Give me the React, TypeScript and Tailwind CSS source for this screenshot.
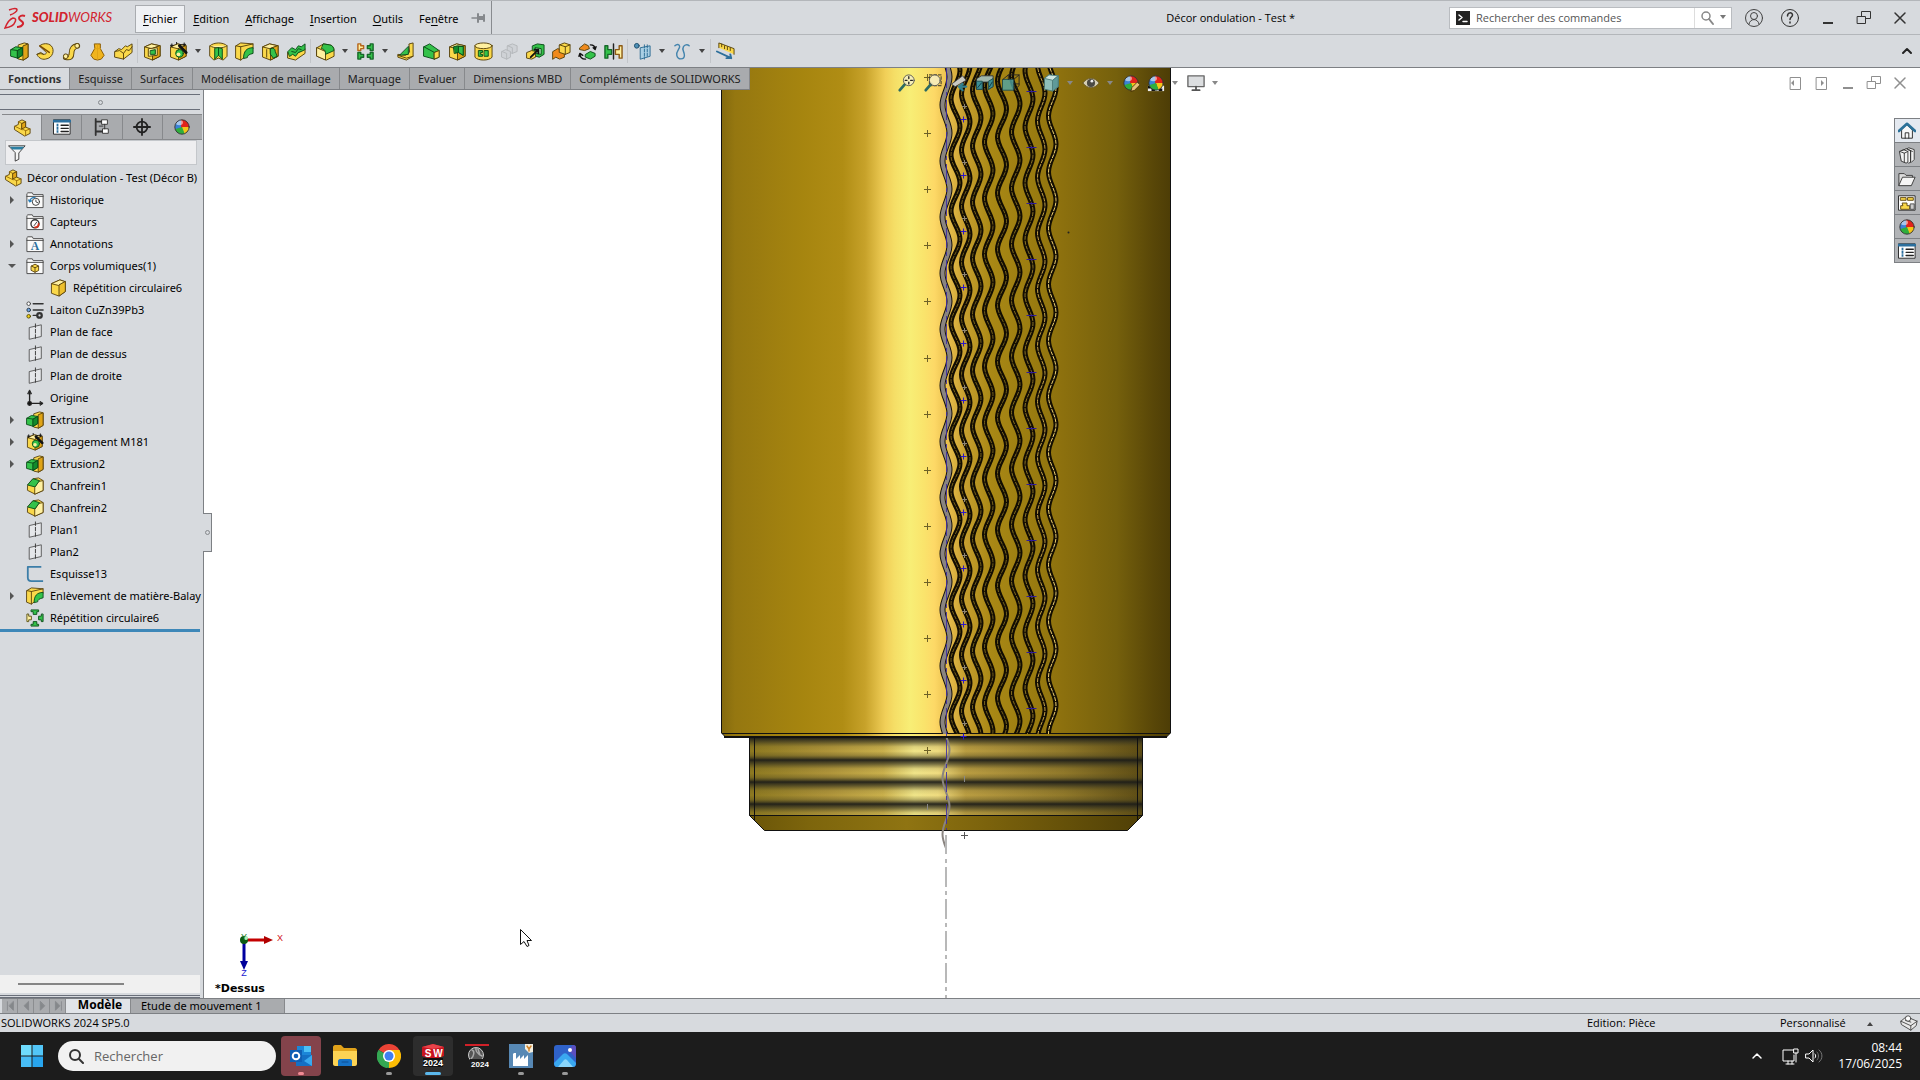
import type { ReactNode } from "react";
import clsx from "clsx";

const Y = "#fad84a";
const YL = "#fff0a0";
const YD = "#e0a416";
const G = "#34c24a";
const GD = "#128a2c";
const INK = "#5a430c";

function Svg({ size = 20, box = 20, children, className }: { size?: number; box?: number; children: ReactNode; className?: string }) {
  return (
    <svg
      width={size}
      height={size}
      viewBox={`0 0 ${box} ${box}`}
      fill="none"
      strokeLinejoin="round"
      strokeLinecap="round"
      className={clsx("shrink-0", className)}
      aria-hidden="true"
    >
      {children}
    </svg>
  );
}

/* ---------- feature icons ---------- */

const YellowBox = () => (
  <g stroke={INK} strokeWidth="1">
    <path d="M2 5 9 2l9 2v11l-8 4-8-3z" fill={Y} />
    <path d="M2 5 9 2l9 2-8 3z" fill={YL} />
    <path d="M10 7v12l8-4V4z" fill={YD} />
  </g>
);

const ICONS: Record<string, ReactNode> = {
  extrude: (
    <g strokeWidth="1">
      <path d="m9 3 6-2 4 1v14l-5 3-5-1z" fill={Y} stroke={INK} />
      <path d="m14 4 5-2v14l-5 3z" fill={YD} stroke={INK} />
      <path d="M1 8 6 5l7 1v8l-5 3-7-2z" fill={G} stroke="#0a4d18" />
      <path d="m1 8 7 1 5-3M8 9v8" stroke="#0a4d18" />
      <path d="m8 9 5-3v8l-5 3z" fill={GD} stroke="#0a4d18" />
    </g>
  ),
  revolve: (
    <g stroke={INK} strokeWidth="1">
      <path d="M4 4c3-3 9-3 12 0 4 4 2 13-6 14-4 1-8-2-9-5l4-2 3 2c3 0 4-2 2-3z" fill={Y} />
      <path d="m4 4 10 7" stroke="#7a4a00" strokeWidth="1.500" />
      <path d="M1 13c3-1 4-1 7 0" />
    </g>
  ),
  sweep: (
    <g>
      <path d="M4 16c5 1 6-1 6-4 0-4 1-7 6-8" stroke={INK} strokeWidth="6" />
      <path d="M4 16c5 1 6-1 6-4 0-4 1-7 6-8" stroke={Y} strokeWidth="4" />
      <circle cx="4" cy="15" r="2.5" fill={YL} stroke={INK} />
      <circle cx="16" cy="4" r="2.5" fill={YL} stroke={INK} />
    </g>
  ),
  loft: (
    <g stroke="#8a5b00" strokeWidth="1">
      <path d="M7 2h6v5l4 7-3 4-4 1-4-1-3-4 4-7z" fill="#f0b41e" />
      <path d="M10 3v15M7 7h6" stroke={YD} />
    </g>
  ),
  boundary: (
    <g stroke={INK} strokeWidth="1">
      <path d="m1 10 4-3 3 1 4-4 2 1 5-3v9l-9 7-9-2z" fill={Y} />
      <path d="m1 10 5-1 4 3 3-4 3 1 3-4M10 12v6" />
    </g>
  ),
  cut: (
    <g>
      <YellowBox />
      <path d="m6 7 9-1v8l-9 1z" fill={YL} stroke={INK} />
      <path d="m8 9 5-1v5H8z" fill={G} stroke="#0a4d18" />
    </g>
  ),
  wizard: (
    <g>
      <YellowBox />
      <circle cx="11" cy="12" r="4" fill={G} stroke="#0a4d18" />
      <circle cx="10" cy="13" r="2" fill={YL} />
      <path d="m11 4 7 7" stroke="#111" strokeWidth="3" />
      <path d="M3 2v3M1.500 3.500h3M8 0v2M16 1v3M14.500 2.500h3M12 3h1" stroke="#111" strokeWidth="1" />
    </g>
  ),
  revolvedCut: (
    <g stroke={INK}>
      <path d="M1 4c4-4 14-4 18 0v11l-4 4-5-2-5 2-4-4z" fill={Y} />
      <path d="M1 4c4 3 14 3 18 0" fill={YL} />
      <path d="m10 6 4 1v11l-4-4-4 4V7z" fill={G} stroke="#0a4d18" />
      <path d="M10 6v8" stroke="#0a4d18" />
    </g>
  ),
  sweptCut: (
    <g stroke={INK}>
      <path d="m1 4 5-3 13 1v5c-7 0-9 4-9 9l-4 3-5-2z" fill={Y} />
      <path d="m1 4 5 1 13-3M6 5v14" />
      <path d="M9 17c0-7 3-11 10-11v6c-4 1-6 2-6 4z" fill={G} stroke="#0a4d18" />
    </g>
  ),
  loftedCut: (
    <g stroke={INK}>
      <YellowBox />
      <path d="M10 7c3-1 5 0 5 3l2 5-4 2-3-4z" fill={G} stroke="#0a4d18" />
      <path d="M6 8v8" />
    </g>
  ),
  boundaryCut: (
    <g strokeWidth="1">
      <path d="m1 11 8 2 10-6v5l-10 7-8-2z" fill={Y} stroke={INK} />
      <path d="m1 10 4-4 4 2 3-4 3 1 4-3v6l-4 2-3 1-3 4-3-2-3 2z" fill={G} stroke="#0a4d18" />
      <path d="m5 10 4 1 3-4 3 1" stroke="#0a4d18" />
    </g>
  ),
  fillet: (
    <g stroke={INK}>
      <path d="m1 6 7-4 6 1c3 0 5 3 5 6v6l-8 4-10-4z" fill={Y} />
      <path d="m1 6 9 4v9L1 15z" fill={YL} />
      <path d="m8 2 6 1c3 0 5 3 5 6l-9 4c0-3 0-5-4-6z" fill={G} stroke="#0a4d18" />
    </g>
  ),
  chamfer: (
    <g stroke={INK}>
      <path d="m2 9 6-7 6-1 5 3v11l-9 4-8-4z" fill={Y} />
      <path d="m10 11 4-6 5-1v11l-9 4z" fill={YL} />
      <path d="m8 2 7 2-5 7-8-2z" fill={G} stroke="#0a4d18" />
    </g>
  ),
  pattern: (
    <g strokeWidth="1.500">
      <path d="M2 2h3v2h3v3H5v2H2z" fill={YL} stroke="#b5651d" />
      <path d="M18 2h-3v2h-3v3h3v2h3zM2 18h3v-2h3v-3H5v-2H2zM18 18h-3v-2h-3v-3h3v-2h3z" fill={G} stroke="#17692a" />
    </g>
  ),
  rib: (
    <g stroke={INK}>
      <path d="m14 2 4-1v14l-7 4-9-3v-3l8 1 4-3z" fill={Y} />
      <path d="M13 5v8l-9 1z" fill={G} stroke="#0a4d18" />
      <path d="M18 15 11 17 2 14" />
    </g>
  ),
  draft: (
    <g stroke="#0a4d18">
      <path d="m2 5 6-3 10 7v7l-5 2-11-3z" fill={G} />
      <path d="M2 5 13 11l5-2M13 11v7" />
      <path d="m13 11 5-2v7l-5 2z" fill={Y} stroke={INK} />
    </g>
  ),
  shell: (
    <g>
      <YellowBox />
      <path d="m6 5 4-1 6 1v9l-5-3-4 1z" fill={GD} stroke="#0a4d18" />
      <path d="M11 5v6l5 3V5z" fill={G} stroke="#0a4d18" />
    </g>
  ),
  wrap: (
    <g stroke={INK}>
      <path d="M1 4v12c3 4 15 4 18 0V4z" fill={Y} />
      <ellipse cx="10" cy="4" rx="9" ry="3" fill={YL} />
      <path d="M5 9h4v2H7v2h2v2H5zM11 9h4v6h-4z" fill={G} stroke="#0a4d18" />
    </g>
  ),
  ghost: (
    <g stroke="#b4b7bb" fill="#cfd2d6">
      <path d="m8 4 5-2 5 2v6l-5 2-5-2z" />
      <path d="m2 10 4-2 5 2v6l-4 2-5-2zM2 10l5 2v6M8 4l5 2v6" />
    </g>
  ),
  split: (
    <g>
      <path d="m7 4 5-2 7 1v10l-5 3-7-2z" fill={G} stroke="#0a4d18" />
      <path d="m10 6 6 1v6l-6-1z" fill="#a9ecb2" stroke="#0a4d18" />
      <path d="m1 11 5-2 4 1v6l-4 2-5-1z" fill={Y} stroke={INK} />
      <path d="m5 16 8-8m0 0H9m4 0v4" stroke="#111" strokeWidth="2" />
    </g>
  ),
  combine: (
    <g stroke={INK}>
      <path d="m1 10 5-3 7 2v7l-5 2-4-2-3 2z" fill="#f08a1c" />
      <path d="m8 3 5-2 6 2v8l-5 2-6-2z" fill={Y} />
      <path d="m8 3 6 2 5-2M14 5v8" />
    </g>
  ),
  move: (
    <g>
      <path d="m2 6 5-4 4 2 1 3-5 2-5-1z" fill="#f08a1c" stroke={INK} />
      <path d="m8 13 5-3 5 2v3l-5 3-5-2z" fill={G} stroke="#0a4d18" />
      <path d="M13 3c3 0 5 1 5 5m0 0-2-2m2 2 1-3M8 18c-4 0-6-2-6-6m0 0-1 3m1-3 3 2" stroke="#111" strokeWidth="1.500" />
    </g>
  ),
  mirror: (
    <g strokeWidth="1.500">
      <path d="M1 4h3v4h4v5H4v4H1z" fill={G} stroke="#17692a" />
      <path d="M19 4h-3v4h-4v5h4v4h3z" fill={YL} stroke="#8c5a16" />
      <path d="M10 2v16" stroke="#222" />
    </g>
  ),
  refPlane: (
    <g>
      <circle cx="4" cy="4" r="2.500" fill="#4e8fb5" stroke="#1e4f6e" />
      <path d="m8 6 10-2v11L8 18z" fill="#a9cfe4" stroke="#2c6d93" />
      <path d="M12 3v15M15 3v13" stroke="#2c6d93" strokeDasharray="3 1.500" />
    </g>
  ),
  curve: <path d="M2 4c2-2 5-2 5 1 0 2-4 5-3 9 1 5 8 5 8 0 0-4-3-6-1-9 1-2 4-3 6-1" stroke="#4484ad" strokeWidth="1.500" />,
  instant: (
    <g>
      <path d="m3 1 16 6v6L3 6z" fill={Y} />
      <path d="M3 6V1l16 6v6M6 2v3M9 4v3M12 5v3M15 6v3" stroke={INK} />
      <path d="m1 10 15 7m0 0-1-4m1 4h-5" stroke="#2d6f9b" strokeWidth="2" />
    </g>
  ),
  circPattern: (
    <g strokeWidth="1">
      <path d="M6 1h8v2h-2v3H8V3H6zM6 19h8v-2h-2v-3H8v3H6zM19 6v8h-2v-2h-3V8h3V6z" fill={G} stroke="#0a4d18" />
      <path d="M1 6v8h2v-2h3V8H3V6z" fill={YL} stroke="#5a5010" />
    </g>
  ),
  part: (
    <g stroke={INK}>
      <path d="m2 8 4-2V3l4-2 4 2v6l5 2v5l-6 3L2 12z" fill={Y} />
      <path d="m6 3 4 2 4-2M10 5v6l4 2 5-2M14 13v5M2 8l8 4" stroke="#9a6c04" />
      <path d="m10 5 4-2v6l-4 2z" fill={YD} />
    </g>
  ),
  body: (
    <g stroke={INK}>
      <path d="m2 5 9-4 6 2v11l-7 5-8-3z" fill={Y} />
      <path d="m2 5 9-4 6 2-7 4z" fill={YL} />
      <path d="M10 7v12l7-5V3z" fill="#eebf2c" />
    </g>
  ),
  material: (
    <g>
      <circle cx="3" cy="3" r="2" fill="#fff" stroke="#444" />
      <circle cx="3" cy="10" r="2" fill="#6ea8e8" stroke="#234" />
      <circle cx="3" cy="17" r="2" fill="#f2d21b" stroke="#554a00" />
      <path d="M8 3h11M8 10h11M8 16h4" stroke="#333" strokeWidth="1.500" />
      <circle cx="15" cy="16" r="2.500" stroke="#333" strokeWidth="2.500" />
    </g>
  ),
  plane: (
    <g stroke="#444">
      <path d="M4 5 17 2v13L4 18z" fill="#e5e7ea" stroke="#555" />
      <path d="M10.500 1v18" stroke="#333" strokeWidth="1" strokeDasharray="4 2" />
    </g>
  ),
  origin: (
    <g stroke="#222" strokeWidth="1.500">
      <path d="M4 3v13h14" />
      <path d="m2 5 2-4 2 4zM16 14l3 2-3 2z" fill="#222" strokeWidth="1" />
      <circle cx="4" cy="16" r="2" fill="#111" />
    </g>
  ),
  sketch: <path d="M17 2H2v12c0 3 1 4 4 4h13" stroke="#3c7ea8" strokeWidth="2" strokeLinecap="butt" />,
};

const Folder = ({ children }: { children: ReactNode }) => (
  <g>
    <path d="M1 18V3l1-1h5l1 2h11v14z" fill="#fafafa" stroke="#444" />
    <path d="M1 6h18" stroke="#444" />
    {children}
  </g>
);

ICONS.history = (
  <Folder>
    <circle cx="11" cy="12" r="4" fill="#fff" stroke="#333" />
    <path d="M11 10v2l2 1" stroke="#333" />
    <path d="M4 12c0-3 3-5 6-5M4 12l-1-2m1 2 2-1" stroke="#2d7fb8" strokeWidth="1.500" />
  </Folder>
);
ICONS.sensors = (
  <Folder>
    <circle cx="10" cy="12" r="4.500" fill="#fff" stroke="#333" strokeWidth="1.500" />
    <path d="m9 14 3-4" stroke="#333" />
    <path d="M10 16c3 0 4-2 4-4" stroke="#d3311d" strokeWidth="2" />
  </Folder>
);
ICONS.notes = (
  <Folder>
    <text x="10" y="17" textAnchor="middle" fontSize="13" fontFamily="Liberation Serif" fontWeight="bold" fill="#2b6f9e">
      A
    </text>
  </Folder>
);
ICONS.bodies = (
  <Folder>
    <path d="m6 10 4-2 4 2v5l-4 2-4-2z" fill={Y} stroke={INK} />
    <path d="m6 10 4 2 4-2M10 12v5" stroke={INK} />
  </Folder>
);

function Ball({ id }: { id: string }) {
  return (
    <g>
      <clipPath id={id}>
        <circle cx="10" cy="10" r="8" />
      </clipPath>
      <g clipPath={`url(#${id})`}>
        <path d="M0 0h10v11L0 14z" fill="#3b82d6" />
        <path d="M9 0h11v11H9z" fill="#e2231a" />
        <path d="M10 10h10v10h-7z" fill="#f5c518" />
        <path d="M0 13 10 10l4 10H0z" fill="#2fae3c" />
        <ellipse cx="7" cy="5" rx="4" ry="3" fill="#fff" opacity=".55" />
      </g>
      <circle cx="10" cy="10" r="8" stroke="#333" strokeWidth="1" />
    </g>
  );
}

/* ---------- title bar ---------- */

const MENUS = [
  ["", "F", "ichier"],
  ["", "E", "dition"],
  ["", "A", "ffichage"],
  ["", "I", "nsertion"],
  ["", "O", "utils"],
  ["Fe", "n", "être"],
];

function WindowIcon({ kind }: { kind: "min" | "restore" | "close" }) {
  return (
    <Svg size={16} box={16}>
      {kind === "min" && <path d="M3 13h10" stroke="currentColor" strokeWidth="2" strokeLinecap="butt" />}
      {kind === "restore" && <path d="M5.500 6.500v-5h9v7h-5M1.500 6.500h8v7h-8z" stroke="currentColor" />}
      {kind === "close" && <path d="m3 3 10 10M13 3 3 13" stroke="currentColor" strokeWidth="1.500" />}
    </Svg>
  );
}

function TitleBar() {
  return (
    <header className="flex h-[35px] shrink-0 items-center border-t border-b border-[#b3b6ba] bg-[#d7dade]">
      <div className="flex w-[135px] shrink-0 items-center pl-1 text-[#d2232e]">
        <svg width="22" height="22" viewBox="0 0 22 22" fill="none" stroke="currentColor" strokeWidth="1.500" aria-hidden="true">
          <path d="M5 3c5-2 8-2 8 0 0 1-3 4-7 5" />
          <path d="M1 21c2-5 5-9 8-10 3 0 3 2 2 4-1 3-4 5-10 6z" />
          <path d="M21 9c-3-1-6 0-6 2 0 3 5 3 4 6-1 2-4 3-6 3" strokeWidth="2" />
        </svg>
        <span className="ml-1.5 font-['Lato',sans-serif] text-[13px] italic leading-none">
          <b className="font-black">SOLID</b>WORKS
        </span>
      </div>
      <nav className="flex items-center pt-0.5">
        {MENUS.map(([pre, key, post], i) => (
          <button
            key={post}
            type="button"
            className={clsx(
              "h-7 border px-[7px]",
              i === 0 ? "border-[#a9acb0] bg-[#eff1f4]" : "border-transparent"
            )}
          >
            {pre}
            <span className="underline underline-offset-2">{key}</span>
            {post}
          </button>
        ))}
      </nav>
      <div className="flex h-full w-[26px] items-center justify-end border-r border-[#888b8f] pr-1">
        <Svg size={16} box={16}>
          <path d="M1 8h6" stroke="#85888c" strokeWidth="1.500" />
          <path d="M7 4v8M13 5v6" stroke="#85888c" strokeWidth="2" />
          <path d="M7 6h6v4H7z" fill="#85888c" />
        </Svg>
      </div>
      <h1 className="ml-auto mr-[154px] font-['Open_Sans',sans-serif]">Décor ondulation - Test *</h1>
      <div className="flex h-[22px] w-[283px] items-center border border-[#b9bcc0] bg-white">
        <span className="ml-1.5 flex h-3.5 w-3.5 items-center justify-center bg-[#222]">
          <Svg size={12} box={12}>
            <path d="m2 3 3 2.500L2 8M6 9.500h4" stroke="#fff" strokeWidth="1.500" />
          </Svg>
        </span>
        <input
          aria-label="Rechercher des commandes"
          placeholder="Rechercher des commandes"
          className="ml-1.5 min-w-0 flex-1 bg-transparent font-['Open_Sans',sans-serif] outline-none placeholder:text-[#555]"
        />
        <button type="button" aria-label="Rechercher" className="flex h-full items-center gap-1 border-l border-[#ddd] px-1">
          <Svg size={16} box={16}>
            <circle cx="7" cy="6" r="4" stroke="#888" strokeWidth="1.500" />
            <path d="m10 9 4 5" stroke="#888" strokeWidth="2" />
          </Svg>
          <Caret className="text-[#777]" />
        </button>
      </div>
      <div className="flex items-center gap-5 pl-3 pr-3 text-[#333]">
        <Svg size={20}>
          <circle cx="10" cy="10" r="8.500" stroke="#444" />
          <circle cx="10" cy="8" r="3.500" stroke="#444" />
          <path d="M5 16c1-6 9-6 10 0" stroke="#444" />
        </Svg>
        <Svg size={20} className="-ml-1">
          <circle cx="10" cy="10" r="8.500" stroke="#333" />
          <path d="M7.500 8c0-4 5-4 5-1 0 2-2.500 2-2.500 4.500M10 14v1" stroke="#333" strokeWidth="1.500" />
        </Svg>
        <button type="button" aria-label="Réduire">
          <WindowIcon kind="min" />
        </button>
        <button type="button" aria-label="Niveau inférieur">
          <WindowIcon kind="restore" />
        </button>
        <button type="button" aria-label="Fermer">
          <WindowIcon kind="close" />
        </button>
      </div>
    </header>
  );
}

function Caret({ className }: { className?: string }) {
  return (
    <svg width="8" height="5" viewBox="0 0 8 5" className={clsx("shrink-0", className)} aria-hidden="true">
      <path d="M1 0h6L4 4z" fill="currentColor" />
    </svg>
  );
}

/* ---------- command manager ---------- */

const TOOLS = (
  "extrude revolve sweep loft boundary | cut wizard v revolvedCut sweptCut loftedCut boundaryCut | fillet v pattern v " +
  "rib draft shell wrap ghost split combine move mirror | refPlane v curve v | instant"
).split(" ");

function Toolbar() {
  return (
    <div className="flex h-[33px] shrink-0 items-center border-b border-[#7d8084] bg-[#d7dade] pl-1.5">
      {TOOLS.map((t, i) => {
        if (t === "|") return <span key={i} className="mx-px h-6 w-px bg-[#c3c6ca]" />;
        if (t === "v")
          return (
            <span key={i} className="flex w-3.5 justify-center text-[#444]">
              <Caret />
            </span>
          );
        return (
          <button key={i} type="button" aria-label={t} className="flex w-[26px] justify-center">
            <Svg size={19}>{ICONS[t]}</Svg>
          </button>
        );
      })}
      <button type="button" aria-label="Replier" className="ml-auto mr-1.5">
        <Svg size={14} box={14}>
          <path d="m3 9 4-4 4 4" stroke="#222" strokeWidth="2" />
        </Svg>
      </button>
    </div>
  );
}

const TABS = [
  "Fonctions",
  "Esquisse",
  "Surfaces",
  "Modélisation de maillage",
  "Marquage",
  "Evaluer",
  "Dimensions MBD",
  "Compléments de SOLIDWORKS",
];

function CommandTabs() {
  return (
    <div className="absolute left-0 top-0 z-10 flex h-[22px] border-b border-[#7d8084]">
      {TABS.map((t, i) => (
        <button
          key={t}
          type="button"
          className={clsx(
            "whitespace-nowrap border-r border-[#87898c] px-2",
            i === 0 ? "bg-[#d7dade] font-bold text-[#333]" : "bg-[#a9abae] text-[#1c1c1c]"
          )}
        >
          {t}
        </button>
      ))}
    </div>
  );
}

/* ---------- feature tree ---------- */

type Node = { icon: string; label: string; arrow?: "closed" | "open"; level?: number };

const TREE: Node[] = [
  { icon: "part", label: "Décor ondulation - Test (Décor B)", level: -1 },
  { icon: "history", label: "Historique", arrow: "closed" },
  { icon: "sensors", label: "Capteurs" },
  { icon: "notes", label: "Annotations", arrow: "closed" },
  { icon: "bodies", label: "Corps volumiques(1)", arrow: "open" },
  { icon: "body", label: "Répétition circulaire6", level: 1 },
  { icon: "material", label: "Laiton CuZn39Pb3" },
  { icon: "plane", label: "Plan de face" },
  { icon: "plane", label: "Plan de dessus" },
  { icon: "plane", label: "Plan de droite" },
  { icon: "origin", label: "Origine" },
  { icon: "extrude", label: "Extrusion1", arrow: "closed" },
  { icon: "wizard", label: "Dégagement M181", arrow: "closed" },
  { icon: "extrude", label: "Extrusion2", arrow: "closed" },
  { icon: "chamfer", label: "Chanfrein1" },
  { icon: "chamfer", label: "Chanfrein2" },
  { icon: "plane", label: "Plan1" },
  { icon: "plane", label: "Plan2" },
  { icon: "sketch", label: "Esquisse13" },
  { icon: "sweptCut", label: "Enlèvement de matière-Balay", arrow: "closed" },
  { icon: "circPattern", label: "Répétition circulaire6" },
];

function TreeRow({ icon, label, arrow, level = 0 }: Node) {
  return (
    <li
      className={clsx(
        "flex h-[22px] items-center whitespace-nowrap",
        level === -1 && "pl-1",
        level === 0 && "pl-2",
        level === 1 && "pl-[50px]"
      )}
    >
      {level === 0 && (
        <span className="w-[18px] shrink-0">
          {arrow && (
            <svg width="8" height="8" viewBox="0 0 8 8" aria-hidden="true">
              <path d={arrow === "closed" ? "M2 0v8l4-4z" : "M0 2h8L4 6z"} fill="#555" />
            </svg>
          )}
        </span>
      )}
      <Svg size={18}>{ICONS[icon]}</Svg>
      <span className={level === 0 ? "ml-1.5" : "ml-[5px]"}>{label}</span>
    </li>
  );
}

const PANEL_TABS: { name: string; icon: ReactNode }[] = [
  { name: "Arbre de création", icon: ICONS.part },
  {
    name: "Propriétés",
    icon: (
      <g>
        <path d="M1 2h18v16H1z" fill="#fff" stroke="#222" />
        <path d="M1 3.500h18" stroke="#2b6f9e" strokeWidth="3" />
        <path d="M4 8h2M4 11.500h2M4 15h2" stroke="#2b6f9e" strokeWidth="3" strokeLinecap="butt" />
        <path d="M9 8h8M9 11.500h8M9 15h8" stroke="#222" strokeWidth="1.500" />
      </g>
    ),
  },
  {
    name: "Configurations",
    icon: (
      <g stroke="#333">
        <path d="M3 1v18M3 4h7M3 15h7" strokeWidth="2" />
        <path d="M10 2h6v5h-6zM11 12h6v5h-6z" fill="#fff" />
        <path d="M7 9h4M13 7v5" />
      </g>
    ),
  },
  {
    name: "Cotes",
    icon: (
      <g stroke="#222" strokeWidth="2">
        <circle cx="10" cy="10" r="6" />
        <path d="M10 1v18M1 10h18" />
      </g>
    ),
  },
  { name: "Apparences", icon: <Ball id="ball-panel" /> },
];

function FeaturePanel() {
  return (
    <aside className="relative flex w-[204px] shrink-0 flex-col border-r border-[#7d8084] bg-[#d7dade] pt-[22px]">
      <div className="mr-[3px] mt-1 flex h-4 items-center justify-center border-y border-[#6a6f7a]">
        <span className="h-[5px] w-[5px] rounded-full border border-[#85888c]" />
      </div>
      <div className="ml-0.5 mr-px mt-1 flex h-[26px] border-t border-[#87898c]">
        {PANEL_TABS.map((t, i) => (
          <button
            key={t.name}
            type="button"
            aria-label={t.name}
            className={clsx(
              "flex flex-1 items-center justify-center",
              i === 0 ? "bg-[#d7dade]" : "border-b border-l border-[#87898c] bg-[#a9abae]"
            )}
          >
            <Svg size={18}>{t.icon}</Svg>
          </button>
        ))}
      </div>
      <label className="ml-[5px] mr-1.5 flex h-[25px] shrink-0 items-center border border-[#c4c7cb] bg-[#eeeef0] pl-0.5">
        <Svg size={18}>
          <path d="M1 2h18l-7 8v7l-4 2v-9z" fill="#f5f5f5" stroke="#333" />
          <path d="M2 3h16l-3 3H5z" fill="#2b7fa3" />
        </Svg>
        <input aria-label="Filtre" className="min-w-0 flex-1 bg-transparent outline-none" />
      </label>
      <ul className="mt-0.5 overflow-hidden">
        {TREE.map((n, i) => (
          <TreeRow key={i} {...n} />
        ))}
      </ul>
      <div className="mr-[3px] h-[3px] shrink-0 bg-[#3d87b8]" />
      <div className="mr-[3px] mt-auto flex h-[18px] shrink-0 items-center bg-[#f0f0f0] pl-[18px]">
        <span className="h-0.5 w-[106px] bg-[#858585]" />
      </div>
      <div className="mr-[3px] mt-0.5 h-[3px] shrink-0 border-y border-[#6a6f7a]" />
      <span className="absolute -right-[9px] top-[445px] z-10 flex h-[39px] w-[9px] items-center justify-center border border-l-0 border-[#7d8084] bg-[#d7dade]">
        <span className="h-[5px] w-[5px] rounded-full border border-[#85888c]" />
      </span>
    </aside>
  );
}

/* ---------- 3D view ---------- */

const PERIOD = 56.1;

// left and right extreme of each groove, the height of one of its left extremes, and the glint inside it
const GROOVES: [number, number, number, string][] = [
  [951, 960, 155, "#75601c"],
  [961.5, 970, 150, "#75601c"],
  [972.5, 981, 146, "#75601c"],
  [984.5, 993, 142, "#75601c"],
  [997.5, 1006.5, 137, "#75601c"],
  [1011.5, 1020, 132, "#80691f"],
  [1025, 1033, 127, "#8d7426"],
  [1037.5, 1045, 121, "#c5a146"],
  [1048.5, 1056, 116, "#f0d070"],
];

function wave(left: number, right: number, phase: number, end = 800) {
  const half = PERIOD / 2;
  const k = half * 0.3642;
  let y = phase - PERIOD * 3;
  let d = `M${left} ${y}`;
  for (let i = 0; y < end; i++) {
    const [a, b] = i % 2 ? [right, left] : [left, right];
    d += `C${a} ${(y + k).toFixed(1)} ${b} ${(y + half - k).toFixed(1)} ${b} ${(y + half).toFixed(1)}`;
    y += half;
  }
  return d;
}

const cross = (x: number, y: number, r = 3.500, rx = r) => `M${x - rx} ${y}h${rx * 2}M${x} ${y - r}v${r * 2}`;

const steps = (from: number, to: number) => {
  const out: number[] = [];
  for (let y = from; y <= to; y += PERIOD) out.push(Math.round(y) + 0.5);
  return out;
};

function Model() {
  const spine = wave(942.5, 949.5, 161, 900);
  return (
    <svg className="absolute inset-0 h-full w-full" viewBox="204 68 1716 930" preserveAspectRatio="xMidYMin meet" role="img" aria-label="Pièce">
      <defs>
        <linearGradient id="brass">
          <stop offset="0" stopColor="#846a0e" />
          <stop offset=".03" stopColor="#957710" />
          <stop offset=".18" stopColor="#a6850f" />
          <stop offset=".27" stopColor="#b08d14" />
          <stop offset=".32" stopColor="#c7a22a" />
          <stop offset=".365" stopColor="#f1cf58" />
          <stop offset=".385" stopColor="#f5de66" />
          <stop offset=".42" stopColor="#f8ee76" />
          <stop offset=".45" stopColor="#fae46c" />
          <stop offset=".475" stopColor="#fdd866" />
          <stop offset=".5" stopColor="#ecc250" />
          <stop offset=".54" stopColor="#c8a030" />
          <stop offset=".6" stopColor="#a98815" />
          <stop offset=".7" stopColor="#997b10" />
          <stop offset=".76" stopColor="#8c700e" />
          <stop offset=".88" stopColor="#75600c" />
          <stop offset=".96" stopColor="#594708" />
          <stop offset="1" stopColor="#4d3d06" />
        </linearGradient>
        <linearGradient id="neck">
          <stop offset="0" stopColor="#8d7920" />
          <stop offset=".2" stopColor="#b0953a" />
          <stop offset=".34" stopColor="#cbb14c" />
          <stop offset=".42" stopColor="#f2e78a" />
          <stop offset=".48" stopColor="#f1dd80" />
          <stop offset=".55" stopColor="#bb9e42" />
          <stop offset=".8" stopColor="#91792a" />
          <stop offset="1" stopColor="#5d4c14" />
        </linearGradient>
        <linearGradient id="lip">
          <stop offset="0" stopColor="#6a5508" />
          <stop offset=".15" stopColor="#7d650c" />
          <stop offset=".4" stopColor="#8f7412" />
          <stop offset=".6" stopColor="#7c630c" />
          <stop offset="1" stopColor="#4f3f06" />
        </linearGradient>
        <linearGradient id="thread" gradientUnits="userSpaceOnUse" x1="0" y1="738" x2="0" y2="760" spreadMethod="repeat">
          <stop offset="0" stopColor="#1c1c18" stopOpacity=".95" />
          <stop offset=".18" stopColor="#33311f" stopOpacity=".65" />
          <stop offset=".4" stopColor="#4a4420" stopOpacity=".12" />
          <stop offset=".6" stopColor="#4a4420" stopOpacity="0" />
          <stop offset=".78" stopColor="#4a4420" stopOpacity=".3" />
          <stop offset="1" stopColor="#1c1c18" stopOpacity=".95" />
        </linearGradient>
        <clipPath id="barrel">
          <path d="M721 68h450v666H721z" />
        </clipPath>
        <clipPath id="tail">
          <path d="M930 738h40v110h-40z" />
        </clipPath>
      </defs>

      <path d="M721.500 60h449v673l-4 4h-441l-4-4z" fill="url(#brass)" stroke="#111" />
      <path d="M722 733.500h448" stroke="#111" />
      <path d="M749.500 738h393v77.500h-393z" fill="url(#neck)" />
      <path d="M749.500 738h393v77.500h-393z" fill="url(#thread)" />
      <path d="M749.500 815.500h393l-15 15h-363z" fill="url(#lip)" stroke="#111" />
      <path d="M749.500 738v77.500M1142.500 738v77.500M754.500 738v82M1137.500 738v82" stroke="#111" fill="none" />
      <path d="M724 737h443" stroke="#111" strokeWidth="2" />

      <g clipPath="url(#barrel)" fill="none">
        {GROOVES.map(([l, r, phase, glint]) => {
          const d = wave(l, r, phase);
          return (
            <g key={l}>
              <path d={d} stroke="#120d02" strokeWidth="5" />
              <path d={d} stroke={glint} strokeDasharray="4 1" />
            </g>
          );
        })}
        <path d={spine} stroke="#141210" strokeWidth="6" />
        <path d={spine} stroke="#8a8480" strokeWidth="4" />
      </g>

      <path d={spine} fill="none" stroke="#8a8480" strokeWidth="2" clipPath="url(#tail)" />

      <path d="M946.500 68v762" stroke="#3b2aa8" strokeDasharray="20 4 4 4" opacity=".85" />
      <path d="M946 835v19M946 859v4M946 867v131" stroke="#b8b8b8" strokeWidth="2" strokeDasharray="20 4 4 4" />

      <g fill="none" strokeWidth="1">
        <path d={steps(77, 760).map((y) => cross(927.5, y)).join("")} stroke="#6d6127" />
        <path d={steps(106, 730).map((y) => cross(964.5, y, 2.5)).join("")} stroke="#8d8474" />
        <path d={steps(119, 740).map((y) => cross(963.5, y, 3)).join("")} stroke="#2a15c8" />
        <path d={steps(91, 720).map((y) => cross(1031.5, y, 1, 5)).join("")} stroke="#2f1c9c" />
        <path d={cross(964.5, 835.5)} stroke="#555" />
        <path d="M927.500 804v6M964.500 776v6" stroke="#888" />
      </g>
      <circle cx="1068.500" cy="232.500" r="1" fill="#222" />

      {/* view triad */}
      <path d="M246 940h18" stroke="#c40000" strokeWidth="3" />
      <path d="m264 936 9 4-9 4z" fill="#b00000" />
      <path d="M244 942v20" stroke="#0000a0" strokeWidth="3" />
      <path d="m240 961 4 9 4-9z" fill="#00009a" />
      <circle cx="244" cy="940" r="4" fill="#0b5a12" />
      <circle cx="246" cy="938" r="2" fill="#b8f0b8" />
      <g fontFamily="Liberation Sans" fontSize="9" textAnchor="middle">
        <text x="280" y="941" fill="#d01020">X</text>
        <text x="244" y="940" fill="#1b7a1b">Y</text>
        <text x="244" y="976" fill="#1a1ad0">Z</text>
      </g>
      <text x="215" y="992" fontFamily="DejaVu Sans" fontSize="11" fontWeight="bold" fill="#000">
        *Dessus
      </text>

      <path d="M520.500 929.500v15l3.500-3 3 5 2-1-2-5h4.500z" fill="#fff" stroke="#111" />
    </svg>
  );
}

const Lens = () => (
  <g>
    <path d="m2 18 6-7" stroke="#2d6b62" strokeWidth="3" />
    <circle cx="12" cy="7" r="6" fill="#f5efc8" fillOpacity=".8" stroke="#555" />
  </g>
);

const VIEW_TOOLS: { name: string; x: string; icon: ReactNode; arrow?: boolean }[] = [
  {
    name: "Zoom au mieux",
    x: "w-[26px]",
    icon: (
      <g>
        <Lens />
        <path d="M12 3v2M12 9v2M8 7h2M14 7h2" stroke="#222" strokeWidth="1.500" />
      </g>
    ),
  },
  {
    name: "Zoom fenêtre",
    x: "w-[26px]",
    icon: (
      <g>
        <path d="M6 1h13v12H6z" stroke="#222" strokeDasharray="3 2" />
        <Lens />
      </g>
    ),
  },
  {
    name: "Vue précédente",
    x: "w-[26px]",
    icon: (
      <g>
        <path d="m2 11 12-9 4 5-12 7z" fill="#c9c9c2" stroke="#444" />
        <path d="M18 14h-8m0 0 4-3m-4 3 4 4" stroke="#2f7f8f" strokeWidth="2.500" />
      </g>
    ),
  },
  {
    name: "Vue en coupe",
    x: "w-[26px]",
    icon: (
      <g>
        <path d="m1 5 5-3h13v12l-5 3v-8H7v8H1z" fill="#9fb7ad" stroke="#333" />
        <path d="M1 8h6v9H1zM14 8l5-3v9l-5 3z" fill="#3b8f93" stroke="#1d4c50" />
        <path d="m2 15 4-5M15 14l3-5" stroke="#134" />
      </g>
    ),
  },
  {
    name: "Orientation",
    x: "w-[40px]",
    icon: (
      <g>
        <path d="M1 6h12v12H1z" fill="#4fa5a5" fillOpacity=".8" stroke="#1d4c50" />
        <path d="m1 6 6-5h12v12l-6 5M13 6l6-5M7 1v5M13 11h6" stroke="#222" />
      </g>
    ),
  },
  {
    name: "Style d'affichage",
    x: "w-[40px]",
    arrow: true,
    icon: (
      <g>
        <path d="m3 5 5-4 10 1v12l-6 5-9-2z" fill="#8fbfba" stroke="#4b7a78" />
        <path d="m3 5 9 2 6-5-10-1z" fill="#cfe6e0" stroke="#4b7a78" />
        <path d="m12 7 6-5v12l-6 5z" fill="#5f9a9a" stroke="#4b7a78" />
      </g>
    ),
  },
  {
    name: "Cacher/Montrer",
    x: "w-[40px]",
    arrow: true,
    icon: (
      <g>
        <path d="M1 10c5-7 13-7 18 0-5 7-13 7-18 0z" fill="#d6cfb4" stroke="#6b5b2a" />
        <circle cx="10" cy="10" r="4.500" fill="#4b4a44" />
        <circle cx="11" cy="8" r="1.500" fill="#eee" />
      </g>
    ),
  },
  {
    name: "Modifier l'apparence",
    x: "w-[25px]",
    icon: (
      <g>
        <Ball id="ball-edit" />
        <path d="m10 19 1-4 6-6 3 3-6 6z" fill="#e8c27a" stroke="#4b3708" />
      </g>
    ),
  },
  {
    name: "Appliquer une scène",
    x: "w-[40px]",
    arrow: true,
    icon: (
      <g>
        <path d="M1 13h18v6H1z" fill="#eee" />
        <path d="M1 13h4v3H1zM9 13h4v3H9zM5 16h4v3H5zM13 16h4v3h-4z" fill="#111" />
        <Ball id="ball-scene" />
      </g>
    ),
  },
  {
    name: "Paramètres de la vue",
    x: "w-[40px]",
    arrow: true,
    icon: (
      <g>
        <path d="M1 2h18v12H1z" fill="#dcdee0" stroke="#666" strokeWidth="1.500" />
        <path d="M10 14v4M6 18h8" stroke="#555" strokeWidth="2" />
      </g>
    ),
  },
];

function ViewToolbar() {
  return (
    <div className="absolute left-[690px] top-[3px] flex h-6 items-center">
      {VIEW_TOOLS.map((t) => (
        <button key={t.name} type="button" aria-label={t.name} className={clsx("flex items-center gap-1.5 pl-1", t.x)}>
          <Svg size={18}>{t.icon}</Svg>
          {t.arrow && <Caret className="text-[#888]" />}
        </button>
      ))}
    </div>
  );
}

const TASKS: { name: string; icon: ReactNode }[] = [
  {
    name: "Ressources",
    icon: (
      <g>
        <path d="M4 9v9h12V9l-6-6z" fill="#f7f7f7" stroke="#222" />
        <path d="M8 18v-6h4v6" stroke="#222" />
        <path d="m1 10 9-8 9 8" stroke="#2b7199" strokeWidth="3" />
      </g>
    ),
  },
  {
    name: "Bibliothèque",
    icon: (
      <g fill="#f2f2f2" stroke="#333">
        <path d="m8 4 4-2 6 2v11l-3 3" />
        <path d="m5 5 4-2 5 2v13l-2 1M2 6l4-2 5 2v12l-2 1-5-2z" />
        <path d="m2 6 5 2 4-2M7 8v10M14 5v13M11 4l5 2" />
      </g>
    ),
  },
  {
    name: "Explorateur",
    icon: (
      <g stroke="#333">
        <path d="M1 17V4h6l2 2h7v3" fill="#ddd" />
        <path d="m1 17 4-9h14l-4 9z" fill="#f5f5f5" />
      </g>
    ),
  },
  {
    name: "Palette de vues",
    icon: (
      <g>
        <path d="M1 2h18v16H1z" fill="#fff" stroke="#222" />
        <path d="M3 4h6v3H3zM11 4h6v3h-6zM5 10h5v3h3v4H3v-4h2z" fill={Y} stroke={INK} />
        <path d="M14 11h4v6h-4z" fill="#ccc" stroke="#444" />
      </g>
    ),
  },
  { name: "Apparences et scènes", icon: <Ball id="ball-task" /> },
  { name: "Propriétés personnalisées", icon: PANEL_TABS[1].icon },
];

function Viewport() {
  return (
    <main className="relative min-w-0 flex-1 overflow-hidden bg-white">
      <Model />
      <ViewToolbar />
      <div className="absolute right-3 top-[7px] flex gap-2.5 text-[#8f8f8f]">
        {["M6 5v6l-3-3z", "m7 5 3 3-3 3z"].map((d) => (
          <button key={d} type="button" aria-label="Volet">
            <Svg size={16} box={16}>
              <path d="M2.500 2.500h10v12h-10z" stroke="currentColor" />
              <path d={d} fill="currentColor" />
            </Svg>
          </button>
        ))}
        <WindowIcon kind="min" />
        <WindowIcon kind="restore" />
        <WindowIcon kind="close" />
      </div>
      <div className="absolute right-0 top-[50px] flex w-[26px] flex-col border-l border-t border-[#7d8084]">
        {TASKS.map((t, i) => (
          <button
            key={t.name}
            type="button"
            aria-label={t.name}
            className={clsx(
              "flex h-6 items-center justify-center border-b border-[#7d8084] pr-px",
              i === 0 ? "bg-[#e4e9f0]" : "bg-[#b2b4b7]"
            )}
          >
            <Svg size={18}>{t.icon}</Svg>
          </button>
        ))}
      </div>
    </main>
  );
}

/* ---------- bottom bars ---------- */

function BottomTabs() {
  return (
    <div className="flex h-4 shrink-0 items-stretch border-y border-[#7d8084] bg-[#d7dade] pl-0.5 leading-none">
      {["M4 2v10M11 2v10L6 7z", "M10 2v10L5 7z", "M5 2v10l5-5z", "M11 2v10M4 2v10l5-5z"].map((d) => (
        <button key={d} type="button" aria-label="Onglet" className="flex w-4 items-center justify-center border-r border-[#8b8d90] bg-[#a9abae]">
          <Svg size={12} box={14}>
            <path d={d} fill="#85888b" stroke="#85888b" />
          </Svg>
        </button>
      ))}
      <button type="button" className="w-16 bg-[#e1e4e8] pb-0.5 pl-1 text-[12px] font-bold leading-none">
        Modèle
      </button>
      <button type="button" className="w-[155px] border-x border-[#87898c] bg-[#a9abae] pb-0.5 pl-2.5 text-left">
        Etude de mouvement 1
      </button>
    </div>
  );
}

function StatusBar() {
  return (
    <footer className="flex h-[18px] shrink-0 items-center bg-[#d7dade] font-['Open_Sans',sans-serif]">
      <span className="pl-px">SOLIDWORKS 2024 SP5.0</span>
      <span className="ml-auto w-[193px]">Edition: Pièce</span>
      <span className="w-[86px]">Personnalisé</span>
      <Caret className="rotate-180 text-[#444]" />
      <Svg size={18} className="ml-[26px] mr-0.5">
        <path d="m1 8 6-5 12 5-1 5-6 5L2 12z" fill="#e8e8e8" stroke="#444" />
        <path d="m1 8 11 5 7-5M12 13v5M6 7l6 2" stroke="#444" />
        <circle cx="9" cy="5" r="3" fill="#fff" stroke="#444" />
      </Svg>
    </footer>
  );
}

const APPS: { name: string; icon: ReactNode; tile?: string; dot?: string }[] = [
  {
    name: "Outlook",
    tile: "bg-[#84434b]",
    dot: "w-1.5 bg-[#f08a94]",
    icon: (
      <g>
        <path d="M8 2h14v11H8z" fill="#1b86d8" />
        <path d="M15 2h7v6h-7z" fill="#4cc0f5" />
        <path d="M7 11h16v11H7z" fill="#1470c4" />
        <path d="m23 11-8 6 8 5z" fill="#38a9ef" />
        <path d="M1 6h12v12H1z" fill="#0f5fb4" />
        <circle cx="7" cy="12" r="3.300" stroke="#fff" strokeWidth="2" />
      </g>
    ),
  },
  {
    name: "Explorateur de fichiers",
    icon: (
      <g>
        <path d="M0 3c0-1 1-2 2-2h6l3 3h11c1 0 2 1 2 2v4H0z" fill="#e0a21a" />
        <path d="M0 7h24v13c0 1-1 2-2 2H2c-1 0-2-1-2-2z" fill="#fcd354" />
        <path d="M5 17c0-1 1-2 2-2h10c1 0 2 1 2 2v5H5z" fill="#1673c8" />
        <path d="M9 18h6" stroke="#0c4f94" />
      </g>
    ),
  },
  {
    name: "Chrome",
    dot: "w-1.5 bg-[#999]",
    icon: (
      <g>
        <path d="M12 12 1.600 6A12 12 0 0 1 22.400 6z" fill="#ea4335" />
        <path d="M12 12 22.400 6A12 12 0 0 1 12 24z" fill="#fbbc05" />
        <path d="M12 12v12A12 12 0 0 1 1.600 6z" fill="#34a853" />
        <path d="M12 6h10.400a12 12 0 0 1-5.200 15z" fill="#fbbc05" />
        <path d="M1.600 6 7 15l5 3-2 6A12 12 0 0 1 1.600 6z" fill="#34a853" />
        <circle cx="12" cy="12" r="6" fill="#fff" />
        <circle cx="12" cy="12" r="4.500" fill="#3f7ff0" />
      </g>
    ),
  },
  {
    name: "SOLIDWORKS",
    tile: "bg-[#2d2d2d]",
    dot: "w-4 bg-[#5bb8ec]",
    icon: (
      <g>
        <path d="m1 3 11-3 11 3v9l-11 4L1 12z" fill="#c8141e" />
        <path d="m1 3 11 2 11-2-11-3z" fill="#e8434a" />
        <text x="7" y="13" textAnchor="middle" fontSize="10" fontWeight="bold" fontFamily="Liberation Sans" fill="#fff">S</text>
        <text x="17" y="13" textAnchor="middle" fontSize="10" fontWeight="bold" fontFamily="Liberation Sans" fill="#fff">W</text>
        <path d="M2 14h20v9H2z" fill="#111" />
        <text x="12" y="22" textAnchor="middle" fontSize="9" fontWeight="bold" fontFamily="Liberation Sans" fill="#fff">2024</text>
      </g>
    ),
  },
  {
    name: "Installation",
    icon: (
      <g>
        <path d="M0 1h24" stroke="#d02028" strokeWidth="2" />
        <circle cx="11" cy="11" r="7.500" fill="#555" stroke="#ccc" />
        <path d="M7 6c3 1 2 6-1 9M11 4c-1 4 2 6 6 8M13 5l2 6" stroke="#aaa" strokeWidth="1.500" />
        <path d="M5 15h19v8H5z" fill="#1c1c1c" />
        <text x="15" y="23" textAnchor="middle" fontSize="8" fontWeight="bold" fontFamily="Liberation Sans" fill="#fff">2024</text>
      </g>
    ),
  },
  {
    name: "Usine",
    dot: "w-1.5 bg-[#999]",
    icon: (
      <g>
        <path d="M0 0h24v24H0z" fill="#5788b4" />
        <path d="M4 22V10l1-1h2v6l4-4v4l4-4v4l4-4v11z" fill="#fff" />
        <path d="M16 0h8v8l-4 1-4-4z" fill="#f2eee0" />
        <path d="m18 2 2 3 2-3M20 5v2" stroke="#d0822a" strokeWidth="1.500" />
      </g>
    ),
  },
  {
    name: "Photos",
    dot: "w-1.5 bg-[#999]",
    icon: (
      <g>
        <rect x="1" y="1" width="22" height="22" rx="3" fill="#2f62c9" />
        <path d="M23 4v10l-8-8 5-5c2 0 3 1 3 3z" fill="#5b4fc0" />
        <path d="m1 19 9-9c1-1 3-1 4 0l9 9c0 2-1 4-3 4H4c-2 0-3-2-3-4z" fill="#3aa8f0" />
        <path d="m5 23 6-7c1-1 2-1 3 0l6 7z" fill="#8ad6fb" />
        <circle cx="17" cy="6" r="2" fill="#fff" />
      </g>
    ),
  },
];

function Taskbar() {
  return (
    <div className="flex h-12 shrink-0 items-center bg-[#1c1c1c] font-['Open_Sans',sans-serif] text-white">
      <button type="button" aria-label="Démarrer" className="ml-5">
        <Svg size={24} box={24}>
          <path d="M1 1h10.500v10.500H1z" fill="#6fdcfd" />
          <path d="M12.500 1H23v10.500H12.500z" fill="#52c6f8" />
          <path d="M1 12.500h10.500V23H1z" fill="#48bdf5" />
          <path d="M12.500 12.500H23V23H12.500z" fill="#28a5ee" />
        </Svg>
      </button>
      <label className="ml-3.5 flex h-[30px] w-[218px] items-center rounded-full bg-[#f1f1f1] px-2.5">
        <Svg size={16} box={16}>
          <circle cx="7" cy="7" r="5" stroke="#333" strokeWidth="2" />
          <path d="m11 11 4 4" stroke="#333" strokeWidth="2" />
        </Svg>
        <input aria-label="Rechercher" placeholder="Rechercher" className="ml-2.5 min-w-0 flex-1 bg-transparent text-[13px] outline-none placeholder:text-[#666]" />
      </label>
      <div className="ml-[5px] flex gap-1">
        {APPS.map((a) => (
          <button
            key={a.name}
            type="button"
            aria-label={a.name}
            className={clsx("relative flex h-10 w-10 items-center justify-center rounded", a.tile)}
          >
            <Svg size={24} box={24}>
              {a.icon}
            </Svg>
            {a.dot && <span className={clsx("absolute bottom-px left-1/2 h-[3px] -translate-x-1/2 rounded-full", a.dot)} />}
          </button>
        ))}
      </div>
      <div className="ml-auto mr-[18px] flex items-center">
        <Svg size={14} box={14}>
          <path d="m3 9 4-4 4 4" stroke="#fff" strokeWidth="1.500" />
        </Svg>
        <Svg size={20} className="ml-4">
          <path d="M13 4H3v11h11V9M6 18h8M8 15v3M12 15v3" stroke="#fff" strokeWidth="1" />
          <path d="M14 3h4v4h-4zM16 7v9" stroke="#fff" />
        </Svg>
        <Svg size={20} className="ml-1">
          <path d="M2 8h3l4-4v12l-4-4H2z" stroke="#fff" />
          <path d="M11 8c1 1 1 3 0 4" stroke="#fff" />
          <path d="M13 6c2 2 2 6 0 8M15 4c4 3 4 9 0 12" stroke="#777" />
        </Svg>
        <div className="ml-3.5 text-right text-[12px] leading-4">
          <div>08:44</div>
          <div>17/06/2025</div>
        </div>
      </div>
    </div>
  );
}

export default function App() {
  return (
    <div className="flex h-screen flex-col overflow-hidden bg-[#d7dade] font-['Noto_Sans',sans-serif] text-[11px] leading-4 text-black">
      <TitleBar />
      <Toolbar />
      <div className="relative flex min-h-0 flex-1">
        <CommandTabs />
        <FeaturePanel />
        <Viewport />
      </div>
      <BottomTabs />
      <StatusBar />
      <Taskbar />
    </div>
  );
}
